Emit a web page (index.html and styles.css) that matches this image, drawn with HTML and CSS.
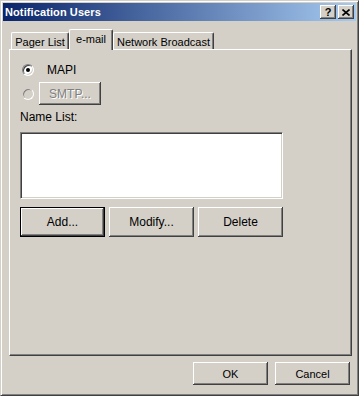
FILE: index.html
```html
<!DOCTYPE html>
<html lang="en">
<head>
  <meta charset="UTF-8" />
  <title>Notification Users</title>
  <link rel="stylesheet" href="styles.css">
</head>
<body>
  <div class="window">
    <!-- title bar -->
    <div class="titlebar">
      <span class="title">Notification Users</span>
      <div class="caption-btns">
        <button class="cap-btn help">?</button>
        <button class="cap-btn close">
          <svg width="8" height="7" viewBox="0 0 8 7"><path d="M0.5 0.5 L7.5 6.5 M7.5 0.5 L0.5 6.5" stroke="#000" stroke-width="1.6" fill="none"/></svg>
        </button>
      </div>
    </div>

    <div class="dlg-body">
      <!-- tabs -->
      <div class="tabs">
        <div class="tab tab-pager">Pager List</div>
        <div class="tab tab-email active">e-mail</div>
        <div class="tab tab-net">Network Broadcast</div>
      </div>

      <div class="panel">
        <div class="radio-row">
          <span class="radio checked"></span>
          <span class="radio-label">MAPI</span>
        </div>
        <div class="radio-row smtp-row">
          <span class="radio disabled"></span>
          <button class="btn btn-smtp" disabled>SMTP...</button>
        </div>
        <div class="field-label">Name List:</div>
        <div class="listbox"></div>
        <div class="btn-row">
          <button class="btn btn-list default">Add...</button>
          <button class="btn btn-list">Modify...</button>
          <button class="btn btn-list">Delete</button>
        </div>
      </div>

      <div class="footer">
        <button class="btn btn-foot">OK</button>
        <button class="btn btn-foot">Cancel</button>
      </div>
    </div>
  </div>
</body>
</html>
```

FILE: styles.css
```css
* {
  box-sizing: border-box;
}
body {
  margin: 0;
  background: #d4d0c8;
  font-family: "Liberation Sans", Arial, sans-serif;
  font-size: 11px;
  color: #000;
}
button {
  font-family: inherit;
  font-size: 11px;
  color: #000;
  padding: 0;
  margin: 0;
  border: 0;
  background: #d4d0c8;
}

/* window frame */
.window {
  width: 359px;
  height: 396px;
  border: 1px solid;
  border-color: #d4d0c8 #404040 #404040 #d4d0c8;
  box-shadow: inset 1px 1px #fff, inset -1px -1px #808080;
  padding: 2px;
  display: flex;
  flex-direction: column;
  background: #d4d0c8;
}

/* title bar */
.titlebar {
  height: 18px;
  display: flex;
  align-items: center;
  justify-content: space-between;
  padding: 0 2px 0 2px;
  background: linear-gradient(to right, #0a246a, #a6caf0);
}
.title {
  color: #fff;
  font-weight: bold;
  font-size: 11px;
  letter-spacing: 0.1px;
}
.caption-btns {
  display: flex;
  gap: 2px;
}
.cap-btn {
  width: 16px;
  height: 14px;
  display: flex;
  align-items: center;
  justify-content: center;
  font-weight: bold;
  font-size: 11px;
  line-height: 14px;
  box-shadow: inset -1px -1px #404040, inset 1px 1px #fff, inset -2px -2px #808080;
}
.cap-btn.help {
  padding-bottom: 1px;
}

/* dialog body */
.dlg-body {
  flex: 1;
  display: flex;
  flex-direction: column;
  padding: 8px 4px 7px 6px;
}

/* tabs */
.tabs {
  display: flex;
  align-items: flex-end;
  height: 20px;
  margin-left: 2px;
}
.tab {
  height: 17px;
  padding-top: 3px;
  text-align: center;
  border-top: 1px solid #fff;
  border-left: 1px solid #fff;
  border-right: 1px solid #404040;
  box-shadow: inset -1px 0 #808080;
  border-radius: 2px 2px 0 0;
}
.tab-pager { width: 58px; }
.tab-email { width: 44px; }
.tab-net { width: 101px; }
.tab.active {
  height: 21px;
  margin-bottom: -1px;
  padding-top: 3px;
  background: #d4d0c8;
  position: relative;
  z-index: 1;
}

/* tab panel */
.panel {
  height: 307px;
  font-size: 12px;
  border-top: 1px solid #fff;
  border-left: 1px solid #fff;
  border-right: 1px solid #404040;
  border-bottom: 1px solid #404040;
  box-shadow: inset -1px -1px #808080;
  padding: 13px 10px 0 10px;
}
.panel button {
  font-size: 12px;
}
.radio-row {
  display: flex;
  align-items: center;
  height: 13px;
}
.radio {
  width: 12px;
  height: 12px;
  margin-left: 2px;
  border-radius: 50%;
  border: 1px solid;
  border-color: #808080 #fff #fff #808080;
  box-shadow: inset 1px 1px #404040, inset -1px -1px #d4d0c8;
  background: #fff;
  display: flex;
  align-items: center;
  justify-content: center;
}
.radio.checked::after {
  content: "";
  width: 4px;
  height: 4px;
  border-radius: 50%;
  background: #000;
}
.radio.disabled {
  background: #d4d0c8;
  box-shadow: inset 1px 1px #808080, inset -1px -1px #d4d0c8;
  border-color: #d4d0c8 #fff #fff #d4d0c8;
}
.radio-label {
  margin-left: 13px;
}
.smtp-row {
  height: 23px;
  margin-top: 6px;
}
.btn {
  display: flex;
  align-items: center;
  justify-content: center;
  box-shadow: inset -1px -1px #404040, inset 1px 1px #fff, inset -2px -2px #808080;
}
.btn-smtp {
  width: 62px;
  height: 23px;
  margin-left: 5px;
  color: #808080;
  text-shadow: 1px 1px #fff;
}
.field-label {
  margin-top: 6px;
  line-height: 13px;
}
.listbox {
  margin-top: 8px;
  width: 263px;
  height: 67px;
  background: #fff;
  border: 1px solid;
  border-color: #808080 #fff #fff #808080;
  box-shadow: inset 1px 1px #404040, inset -1px -1px #d4d0c8;
}
.btn-row {
  display: flex;
  gap: 4px;
  margin-top: 8px;
}
.btn-list {
  width: 85px;
  height: 30px;
}
.btn-list.default {
  border: 1px solid #000;
  box-shadow: inset -1px -1px #404040, inset 1px 1px #fff, inset -2px -2px #808080;
}

/* footer buttons */
.footer {
  display: flex;
  justify-content: flex-end;
  gap: 7px;
  margin-top: 6px;
  padding-right: 2px;
}
.btn-foot {
  width: 75px;
  height: 23px;
}
```
